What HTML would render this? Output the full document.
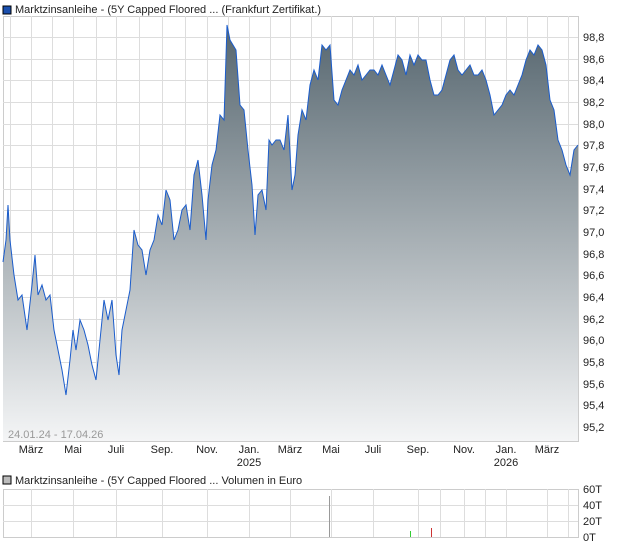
<!DOCTYPE html>
<html><head><style>
body{margin:0;background:#fff;width:620px;height:546px;overflow:hidden;font-family:"Liberation Sans",sans-serif}
</style></head><body>
<svg width="620" height="546" xmlns="http://www.w3.org/2000/svg" font-family="Liberation Sans, sans-serif" font-size="11">
<defs><linearGradient id="g" gradientUnits="userSpaceOnUse" x1="0" y1="25" x2="0" y2="441"><stop offset="0" stop-color="#56666f"/><stop offset="1" stop-color="#f4f5f6"/></linearGradient></defs>
<rect x="3" y="6" width="8" height="8" fill="#1a4fae" stroke="#000" stroke-width="1"/>
<text x="15" y="13" fill="#222">Marktzinsanleihe - (5Y Capped Floored ... (Frankfurt Zertifikat.)</text>
<g stroke="#ddd" stroke-width="1">
<rect x="3.5" y="16.5" width="575" height="425" fill="none" stroke="#ccc"/>
<line x1="3" x2="578" y1="37.5" y2="37.5"/><line x1="3" x2="578" y1="59.5" y2="59.5"/><line x1="3" x2="578" y1="80.5" y2="80.5"/><line x1="3" x2="578" y1="102.5" y2="102.5"/><line x1="3" x2="578" y1="124.5" y2="124.5"/><line x1="3" x2="578" y1="145.5" y2="145.5"/><line x1="3" x2="578" y1="167.5" y2="167.5"/><line x1="3" x2="578" y1="189.5" y2="189.5"/><line x1="3" x2="578" y1="210.5" y2="210.5"/><line x1="3" x2="578" y1="232.5" y2="232.5"/><line x1="3" x2="578" y1="254.5" y2="254.5"/><line x1="3" x2="578" y1="275.5" y2="275.5"/><line x1="3" x2="578" y1="297.5" y2="297.5"/><line x1="3" x2="578" y1="319.5" y2="319.5"/><line x1="3" x2="578" y1="340.5" y2="340.5"/><line x1="3" x2="578" y1="362.5" y2="362.5"/><line x1="3" x2="578" y1="384.5" y2="384.5"/><line x1="3" x2="578" y1="405.5" y2="405.5"/><line x1="3" x2="578" y1="427.5" y2="427.5"/>
<path d="M10.5 16V441M31.5 16V441M52.5 16V441M73.5 16V441M96.5 16V441M116.5 16V441M139.5 16V441M162.5 16V441M185.5 16V441M207.5 16V441M228.5 16V441M249.5 16V441M270.5 16V441M290.5 16V441M311.5 16V441M331.5 16V441M352.5 16V441M373.5 16V441M395.5 16V441M418.5 16V441M441.5 16V441M464.5 16V441M485.5 16V441M506.5 16V441M527.5 16V441M547.5 16V441M568.5 16V441"/>
</g>
<path id="p" fill="url(#g)" stroke="none" d="M3,262 L6,240 8,205 10,240 14,275 18,300 22,295 27,330 32,285 35,255 38,295 42,285 46,300 50,295 54,330 58,350 62,370 66,395 70,360 73,330 76,350 80,320 84,330 88,345 92,365 96,380 100,340 104,300 108,320 112,300 116,355 119,375 122,330 126,310 130,290 134,230 138,245 142,250 146,275 150,250 154,240 158,215 162,225 166,190 170,200 174,240 178,230 182,210 186,205 190,230 194,175 198,160 202,195 206,240 208,200 212,165 216,150 220,115 224,120 227,25 230,40 233,45 236,50 240,105 244,110 248,150 252,185 255,235 258,195 262,190 266,210 269,140 272,145 276,140 280,140 284,150 288,115 292,190 295,175 298,135 302,110 306,120 310,85 314,70 318,80 322,45 326,50 330,45 334,100 338,105 342,90 346,80 350,70 354,75 358,65 362,80 366,75 370,70 374,70 378,75 382,65 386,75 390,85 394,70 398,55 402,60 406,75 410,55 414,65 418,55 422,60 426,60 430,80 434,95 438,95 442,90 446,75 450,60 454,55 458,70 462,75 466,70 470,65 474,75 478,75 482,70 486,80 490,95 494,115 498,110 502,105 506,95 510,90 514,95 518,85 522,75 526,60 530,50 534,55 538,45 542,50 546,65 550,100 554,110 558,140 562,150 566,165 570,175 574,150 578,145 L578,441 L3,441 Z"/>
<path fill="none" stroke="#1a5ccc" stroke-width="1" d="M3,262 L6,240 8,205 10,240 14,275 18,300 22,295 27,330 32,285 35,255 38,295 42,285 46,300 50,295 54,330 58,350 62,370 66,395 70,360 73,330 76,350 80,320 84,330 88,345 92,365 96,380 100,340 104,300 108,320 112,300 116,355 119,375 122,330 126,310 130,290 134,230 138,245 142,250 146,275 150,250 154,240 158,215 162,225 166,190 170,200 174,240 178,230 182,210 186,205 190,230 194,175 198,160 202,195 206,240 208,200 212,165 216,150 220,115 224,120 227,25 230,40 233,45 236,50 240,105 244,110 248,150 252,185 255,235 258,195 262,190 266,210 269,140 272,145 276,140 280,140 284,150 288,115 292,190 295,175 298,135 302,110 306,120 310,85 314,70 318,80 322,45 326,50 330,45 334,100 338,105 342,90 346,80 350,70 354,75 358,65 362,80 366,75 370,70 374,70 378,75 382,65 386,75 390,85 394,70 398,55 402,60 406,75 410,55 414,65 418,55 422,60 426,60 430,80 434,95 438,95 442,90 446,75 450,60 454,55 458,70 462,75 466,70 470,65 474,75 478,75 482,70 486,80 490,95 494,115 498,110 502,105 506,95 510,90 514,95 518,85 522,75 526,60 530,50 534,55 538,45 542,50 546,65 550,100 554,110 558,140 562,150 566,165 570,175 574,150 578,145"/>
<text x="8" y="438" fill="#999">24.01.24 - 17.04.26</text>
<g fill="#222">
<text x="583" y="41">98,8</text><text x="583" y="63">98,6</text><text x="583" y="84">98,4</text><text x="583" y="106">98,2</text><text x="583" y="128">98,0</text><text x="583" y="149">97,8</text><text x="583" y="171">97,6</text><text x="583" y="193">97,4</text><text x="583" y="214">97,2</text><text x="583" y="236">97,0</text><text x="583" y="258">96,8</text><text x="583" y="279">96,6</text><text x="583" y="301">96,4</text><text x="583" y="323">96,2</text><text x="583" y="344">96,0</text><text x="583" y="366">95,8</text><text x="583" y="388">95,6</text><text x="583" y="409">95,4</text><text x="583" y="431">95,2</text>
<g text-anchor="middle"><text x="31" y="453">März</text><text x="73" y="453">Mai</text><text x="116" y="453">Juli</text><text x="162" y="453">Sep.</text><text x="207" y="453">Nov.</text><text x="249" y="453">Jan.</text><text x="249" y="466">2025</text><text x="290" y="453">März</text><text x="331" y="453">Mai</text><text x="373" y="453">Juli</text><text x="418" y="453">Sep.</text><text x="464" y="453">Nov.</text><text x="506" y="453">Jan.</text><text x="506" y="466">2026</text><text x="547" y="453">März</text></g>
</g>
<rect x="3" y="476" width="8" height="8" fill="#bbb" stroke="#000" stroke-width="1"/>
<text x="15" y="484" fill="#222">Marktzinsanleihe - (5Y Capped Floored ... Volumen in Euro</text>
<g stroke="#ddd"><rect x="3.5" y="489.5" width="575" height="48" fill="none" stroke="#ccc"/>
<line x1="3" x2="578" y1="505.5" y2="505.5"/><line x1="3" x2="578" y1="521.5" y2="521.5"/>
<path d="M31.5 489V537M73.5 489V537M116.5 489V537M162.5 489V537M207.5 489V537M249.5 489V537M290.5 489V537M331.5 489V537M373.5 489V537M418.5 489V537M440.5 489V537M464.5 489V537M485.5 489V537M506.5 489V537M547.5 489V537M568.5 489V537"/></g>
<line x1="329.5" x2="329.5" y1="496" y2="537" stroke="#999"/>
<line x1="410.5" x2="410.5" y1="531" y2="537" stroke="#3c3"/>
<line x1="431.5" x2="431.5" y1="528" y2="537" stroke="#c33"/>
<g fill="#222"><text x="583" y="493">60T</text><text x="583" y="509">40T</text><text x="583" y="525">20T</text><text x="583" y="541">0T</text></g>
</svg>
</body></html>
